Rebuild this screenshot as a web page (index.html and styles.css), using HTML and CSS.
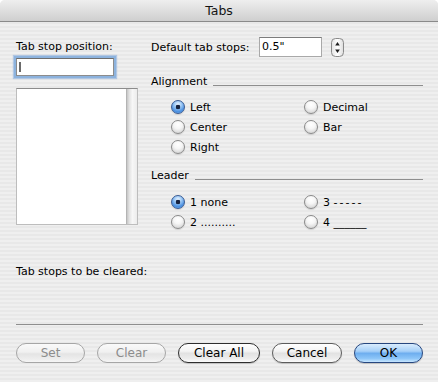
FILE: index.html
```html
<!DOCTYPE html>
<html>
<head>
<meta charset="utf-8">
<title>Tabs</title>
<link rel="stylesheet" href="styles.css">
</head>
<body>
<div class="window">
  <div class="titlebar">Tabs</div>
  <div class="content">
    <div class="top">
      <div class="left">
        <div class="label">Tab stop position:</div>
        <div class="posfield"><span class="caret"></span></div>
        <div class="list"><div class="scroll"></div></div>
      </div>
      <div class="right">
        <div class="default-row">
          <span class="lbl">Default tab stops:</span>
          <div class="numfield">0.5"</div>
          <svg class="spinner" width="13" height="19" viewBox="0 0 13 19">
            <defs>
              <linearGradient id="sg" x1="0" y1="0" x2="1" y2="0">
                <stop offset="0" stop-color="#e2e2e2"/>
                <stop offset="0.5" stop-color="#ffffff"/>
                <stop offset="1" stop-color="#dcdcdc"/>
              </linearGradient>
            </defs>
            <rect x="0.5" y="0.5" width="12" height="18" rx="4" fill="url(#sg)" stroke="#8a8a8a"/>
            <path d="M6.5 4 L8.8 7.5 H4.2 Z" fill="#1e1e1e"/>
            <path d="M6.5 15 L8.8 11.5 H4.2 Z" fill="#1e1e1e"/>
          </svg>
        </div>

        <div class="group-head head-align"><span>Alignment</span><span class="rule"></span></div>
        <div class="radios">
          <div class="radio"><span class="dot on"></span>Left</div>
          <div class="radio"><span class="dot"></span>Decimal</div>
          <div class="radio"><span class="dot"></span>Center</div>
          <div class="radio"><span class="dot"></span>Bar</div>
          <div class="radio"><span class="dot"></span>Right</div>
        </div>

        <div class="group-head head-leader"><span>Leader</span><span class="rule"></span></div>
        <div class="radios radios-leader">
          <div class="radio"><span class="dot on"></span>1 none</div>
          <div class="radio"><span class="dot"></span>3 <span class="dashes">-----</span></div>
          <div class="radio"><span class="dot"></span>2 ..........</div>
          <div class="radio"><span class="dot"></span>4 ______</div>
        </div>
      </div>
    </div>

    <div class="cleared">Tab stops to be cleared:</div>
    <div class="sep"></div>

    <div class="buttons">
      <div class="btn disabled w69">Set</div>
      <div class="btn disabled w69">Clear</div>
      <div class="btn dark w82">Clear All</div>
      <div class="btn w70">Cancel</div>
      <div class="btn default w69">OK</div>
    </div>
  </div>
</div>
</body>
</html>
```

FILE: styles.css
```css
html, body {
  margin: 0;
  padding: 0;
  background: #ffffff;
}

body {
  width: 438px;
  height: 382px;
  overflow: hidden;
  font-family: "DejaVu Sans", "Liberation Sans", sans-serif;
  font-size: 11px;
  color: #000;
}

.window {
  width: 438px;
  height: 382px;
  border-radius: 5px 5px 0 0;
  overflow: hidden;
  background: repeating-linear-gradient(to bottom, #efefef 0, #efefef 2px, #e8e8e8 2px, #e8e8e8 4px);
}

.titlebar {
  height: 21px;
  line-height: 21px;
  border-bottom: 1px solid #8a8a8a;
  background: linear-gradient(to bottom, #eeeeee, #cfcfcf);
  text-align: center;
  font-size: 12.5px;
  color: #141414;
}

.content {
  padding: 15px 15px 0 16px;
}

.top {
  display: flex;
  gap: 13px;
}

.left {
  width: 122px;
  padding-top: 3px;
}

.label {
  line-height: 13px;
}

.posfield {
  margin-top: 5px;
  width: 98px;
  height: 18px;
  box-sizing: border-box;
  background: #fff;
  border: 1px solid #8c8c8c;
  border-top-color: #6e6e6e;
  box-shadow: 0 0 0 2px #8db3de, 0 0 1px 3px rgba(130, 170, 220, 0.55);
  padding: 3px 0 0 2px;
}

.caret {
  display: block;
  width: 2px;
  height: 10px;
  background: #6a6a6a;
}

.list {
  margin-top: 12px;
  height: 137px;
  box-sizing: border-box;
  background: #fff;
  border: 1px solid #bdbdbd;
  border-top-color: #8c8c8c;
  display: flex;
  justify-content: flex-end;
}

.scroll {
  width: 10px;
  border-left: 1px solid #b4b4b4;
  background: linear-gradient(to right, #c6c6c6 0%, #e4e4e4 25%, #f7f7f7 55%, #ececec 100%);
}

.right {
  width: 272px;
}

.default-row {
  display: flex;
  align-items: center;
  height: 20px;
}

.lbl {
  width: 108px;
}

.numfield {
  width: 63px;
  height: 20px;
  box-sizing: border-box;
  background: #fff;
  border: 1px solid #a9a9a9;
  border-top-color: #7c7c7c;
  padding-left: 2px;
  line-height: 18px;
}

.spinner {
  margin-left: 9px;
  display: block;
}

.group-head {
  display: flex;
  align-items: flex-end;
  line-height: 13px;
}

.head-align {
  margin-top: 18px;
}

.head-leader {
  margin-top: 12px;
}

.group-head .rule {
  flex: 1;
  height: 1px;
  background: #8e8e8e;
  margin: 0 0 2px 6px;
}

.radios {
  display: grid;
  grid-template-columns: 133px auto;
  margin: 9px 0 0 20px;
}

.radios-leader {
  margin-top: 10px;
}

.radio {
  display: flex;
  align-items: center;
  height: 20px;
  white-space: pre;
}

.dot {
  width: 14px;
  height: 14px;
  box-sizing: border-box;
  border-radius: 50%;
  margin-right: 5px;
  border: 1px solid #8a8a8a;
  background: radial-gradient(circle at 50% 30%, #ffffff 0, #f6f6f6 40%, #d4d4d4 85%, #e8e8e8 100%);
  box-shadow: 0 1px 1px rgba(0, 0, 0, 0.12);
}

.dot.on {
  border-color: #3a5b92;
  background:
    radial-gradient(circle at 50% 50%, #16223f 0, #16223f 2px, rgba(22, 34, 63, 0) 2.6px),
    radial-gradient(circle at 50% 28%, #eaf4ff 0, #9cc8f5 35%, #4a8fe0 70%, #86c2fa 100%);
}

.dashes {
  letter-spacing: 2px;
}

.cleared {
  margin-top: 33px;
  line-height: 13px;
}

.sep {
  margin-top: 46px;
  height: 1px;
  background: #8e8e8e;
}

.buttons {
  display: flex;
  gap: 12px;
  margin-top: 18px;
}

.btn {
  height: 20px;
  box-sizing: border-box;
  border-radius: 10px;
  border: 1px solid #5c5c5c;
  font-size: 12px;
  line-height: 18px;
  text-align: center;
  color: #000;
  background: linear-gradient(to bottom, #ffffff 0%, #f3f3f3 40%, #e2e2e2 52%, #ececec 80%, #fbfbfb 100%);
  box-shadow: 0 1px 1px rgba(0, 0, 0, 0.18);
}

.btn.dark {
  border-color: #2e2e2e;
}

.btn.disabled {
  color: #8c8c8c;
  border-color: #a6a6a6;
  background: linear-gradient(to bottom, #fafafa 0%, #f0f0f0 45%, #e4e4e4 55%, #eeeeee 85%, #f6f6f6 100%);
  box-shadow: none;
}

.btn.default {
  border-color: #27477f;
  background: linear-gradient(to bottom, #d9ecfd 0%, #a6d0f8 40%, #6eaeef 52%, #8cc5f8 80%, #c8e6fe 100%);
}

.w69 { width: 69px; }
.w70 { width: 70px; }
.w82 { width: 82px; }
```
